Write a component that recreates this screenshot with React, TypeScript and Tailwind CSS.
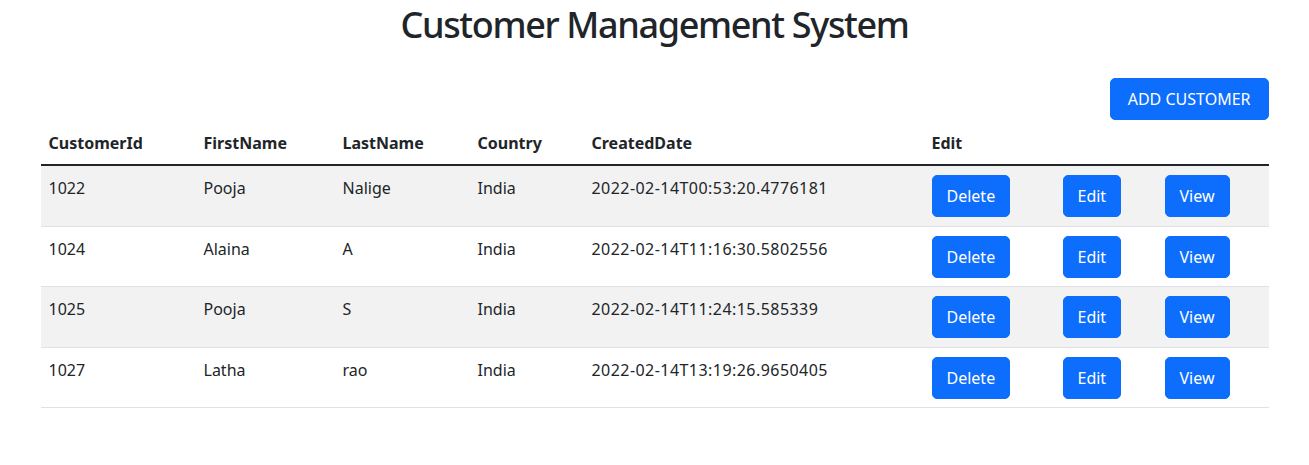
import React from 'react';

type Customer = {
    id: number;
    firstName: string;
    lastName: string;
    country: string;
    createdDate: string;
};

const customers: Customer[] = [
    {id: 1022, firstName: 'Pooja', lastName: 'Nalige', country: 'India', createdDate: '2022-02-14T00:53:20.4776181'},
    {id: 1024, firstName: 'Alaina', lastName: 'A', country: 'India', createdDate: '2022-02-14T11:16:30.5802556'},
    {id: 1025, firstName: 'Pooja', lastName: 'S', country: 'India', createdDate: '2022-02-14T11:24:15.585339'},
    {id: 1027, firstName: 'Latha', lastName: 'rao', country: 'India', createdDate: '2022-02-14T13:19:26.9650405'},
];

const btn = "bg-[#0d6efd] text-white text-[16px] leading-6 px-[14px] py-2 rounded-[5px] border border-[#0d6efd] hover:bg-[#0b5ed7]";
const cell = "px-2 pt-[10px] pb-[25.5px] align-top leading-6";
const btnCell = "px-2 pt-[9px] pb-[8.5px] align-top";

const App: React.FC = () => {
    return (
        <div className="min-h-[465px] bg-white text-[#212529] font-['Noto_Sans',sans-serif] text-[16px]">
            <div className="w-[1228px] mx-auto">
                <h1 className="text-center text-[36px] leading-[48px] font-medium tracking-[-1.35px] pt-[1px]">Customer Management System</h1>

                <div className="flex justify-end mt-[29px]">
                    <button type="button" className="bg-[#0d6efd] text-white text-[16px] leading-6 px-[17px] py-2 rounded-[5px] border border-[#0d6efd]">
                        ADD CUSTOMER
                    </button>
                </div>

                <table className="w-full table-fixed border-collapse mt-[3px]">
                    <colgroup>
                        <col className="w-[155px]"/>
                        <col className="w-[139px]"/>
                        <col className="w-[135px]"/>
                        <col className="w-[114px]"/>
                        <col className="w-[340px]"/>
                        <col className="w-[131px]"/>
                        <col className="w-[102px]"/>
                        <col className="w-[112px]"/>
                    </colgroup>
                    <thead>
                    <tr className="border-b-2 border-[#212529] text-left">
                        <th className="px-2 pt-2 pb-[9px] leading-6 font-bold">CustomerId</th>
                        <th className="px-2 pt-2 pb-[9px] leading-6 font-bold">FirstName</th>
                        <th className="px-2 pt-2 pb-[9px] leading-6 font-bold">LastName</th>
                        <th className="px-2 pt-2 pb-[9px] leading-6 font-bold">Country</th>
                        <th className="px-2 pt-2 pb-[9px] leading-6 font-bold">CreatedDate</th>
                        <th className="px-2 pt-2 pb-[9px] leading-6 font-bold">Edit</th>
                        <th className="px-2 py-2"></th>
                        <th className="px-2 py-2"></th>
                    </tr>
                    </thead>
                    <tbody>
                    {customers.map((c, i) => (
                        <tr key={c.id} className={"border-b border-[#dee2e6] " + (i % 2 === 0 ? "bg-[#f2f2f2]" : "bg-white")}>
                            <td className={cell}>{c.id}</td>
                            <td className={cell}>{c.firstName}</td>
                            <td className={cell}>{c.lastName}</td>
                            <td className={cell}>{c.country}</td>
                            <td className={cell + " tracking-[0.45px]"}>{c.createdDate}</td>
                            <td className={btnCell}>
                                <button type="button" className={btn}>Delete</button>
                            </td>
                            <td className={btnCell}>
                                <button type="button" className={btn}>Edit</button>
                            </td>
                            <td className={btnCell}>
                                <button type="button" className={btn}>View</button>
                            </td>
                        </tr>
                    ))}
                    </tbody>
                </table>
            </div>
        </div>
    );
};

export default App;
